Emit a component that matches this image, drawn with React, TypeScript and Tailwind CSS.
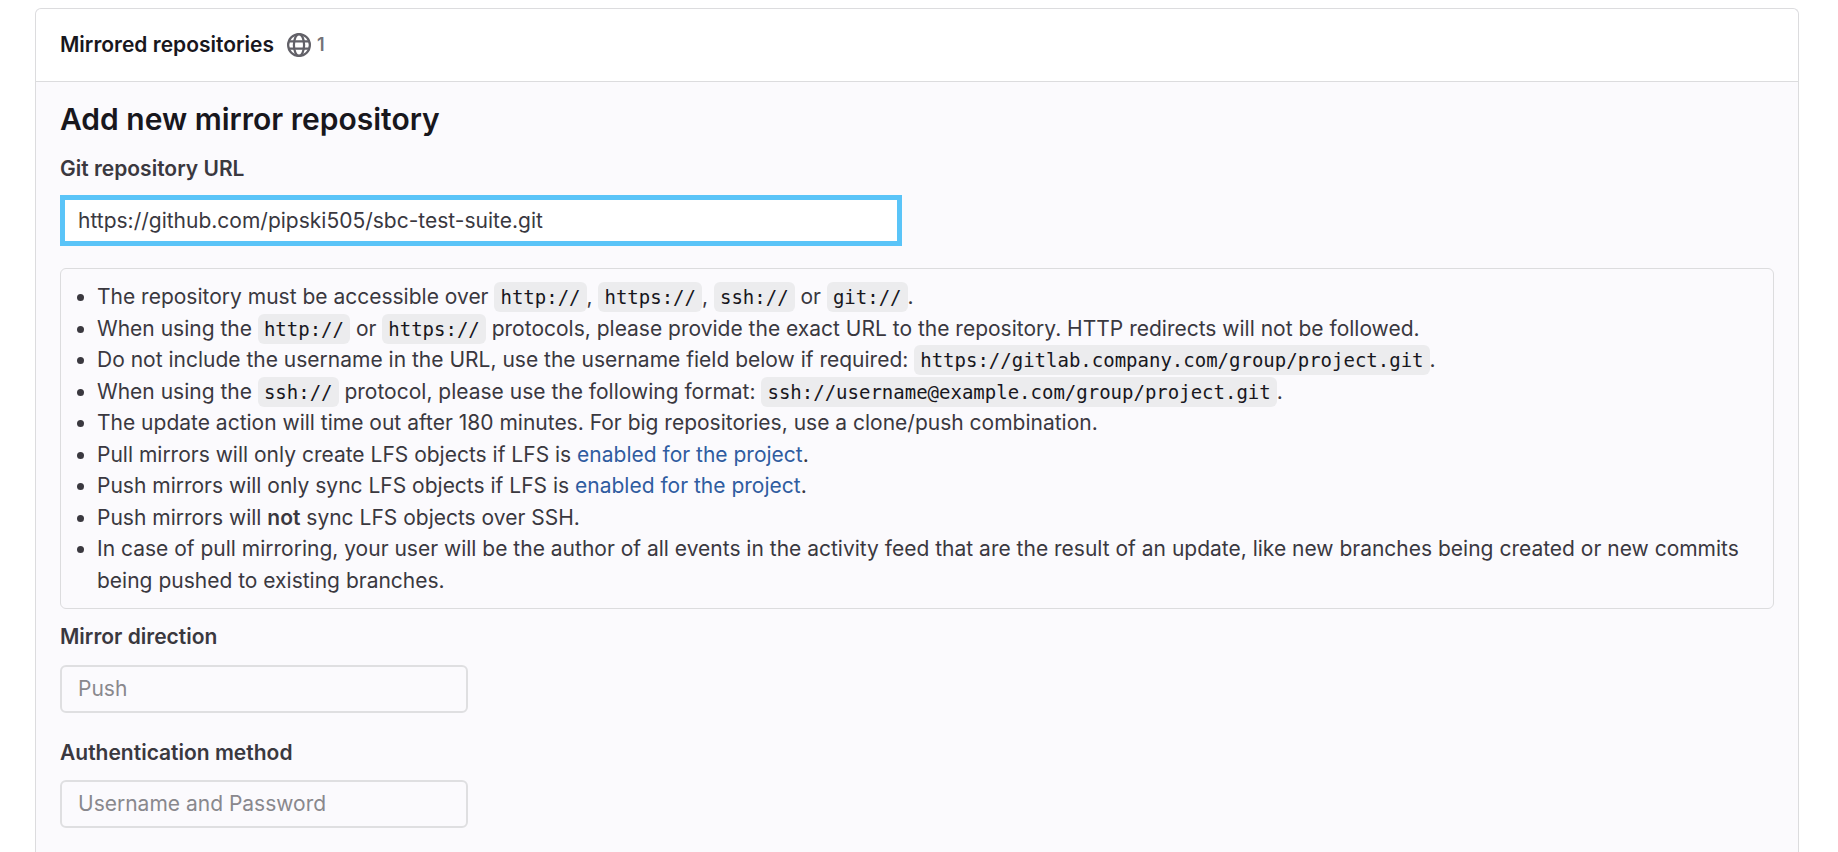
import { ReactNode, useState } from 'react';

function EarthIcon() {
  return (
    <svg viewBox="0 0 16 16" className="size-6" fill="none" stroke="currentColor" strokeWidth="1.5" aria-hidden="true">
      <circle cx="8" cy="8" r="7.25" />
      <ellipse cx="8" cy="8" rx="3.4" ry="7.25" />
      <path d="M1.2 5.65h13.6M1.2 10.35h13.6" />
    </svg>
  );
}

function Code({ children }: { children: ReactNode }) {
  return (
    <code className="rounded-md bg-[#ececee] px-1.5 py-1 font-['DejaVu_Sans_Mono',monospace] text-[19px] text-[#18171d]">
      {children}
    </code>
  );
}

function LfsLink() {
  return (
    <a href="#lfs" className="text-[#2f5ca0] hover:underline">
      enabled for the project
    </a>
  );
}

function DisabledSelect({ id, label, value }: { id: string; label: string; value: string }) {
  return (
    <div>
      <label htmlFor={id} className="block font-semibold">
        {label}
      </label>
      <select
        id={id}
        disabled
        defaultValue={value}
        className="mt-3 block h-12 w-full max-w-[408px] appearance-none rounded-md border-2 border-[#dfdfe1] bg-[#fbfafd] px-4 text-[#89888d] opacity-100"
      >
        <option value={value}>{value}</option>
      </select>
    </div>
  );
}

export default function App() {
  const [url, setUrl] = useState('https://github.com/pipski505/sbc-test-suite.git');

  return (
    <div className="flex h-screen flex-col overflow-hidden bg-white pt-2 pr-[39px] pl-[35px] font-['Inter',sans-serif] text-[21px] leading-normal text-[#3a383f]">
      <section className="grow rounded-t-md border border-b-0 border-[#dcdcde] bg-[#fbfafd]">
        <header className="flex items-center gap-[13px] rounded-t-md border-b border-[#dcdcde] bg-white px-6 py-5">
          <h2 className="font-semibold text-[#18171d]">Mirrored repositories</h2>
          <span className="flex items-center gap-1.5 text-[#626168]">
            <EarthIcon />
            <span className="text-lg font-semibold text-[#737278]">1</span>
          </span>
        </header>

        <form className="px-6 pt-5 pb-6" onSubmit={(e) => e.preventDefault()}>
          <h3 className="text-3xl leading-[34px] font-semibold text-[#18171d]">Add new mirror repository</h3>
          <label htmlFor="url" className="mt-[17px] block font-semibold">
            Git repository URL
          </label>
          <input
            id="url"
            type="text"
            value={url}
            onChange={(e) => setUrl(e.target.value)}
            className="mt-[11px] block h-[51px] w-full max-w-[842px] border-[5px] border-[#5ac4f8] bg-white px-[13px] outline-none"
          />

          <ul className="mt-[22px] list-disc rounded-md border border-[#dcdcde] py-3 pr-6 pl-9">
            <li>
              The repository must be accessible over <Code>http://</Code>, <Code>https://</Code>, <Code>ssh://</Code> or{' '}
              <Code>git://</Code>.
            </li>
            <li>
              When using the <Code>http://</Code> or <Code>https://</Code> protocols, please provide the exact URL to the
              repository. HTTP redirects will not be followed.
            </li>
            <li>
              Do not include the username in the URL, use the username field below if required:{' '}
              <Code>https://gitlab.company.com/group/project.git</Code>.
            </li>
            <li>
              When using the <Code>ssh://</Code> protocol, please use the following format:{' '}
              <Code>ssh://username@example.com/group/project.git</Code>.
            </li>
            <li>The update action will time out after 180 minutes. For big repositories, use a clone/push combination.</li>
            <li>
              Pull mirrors will only create LFS objects if LFS is <LfsLink />.
            </li>
            <li>
              Push mirrors will only sync LFS objects if LFS is <LfsLink />.
            </li>
            <li>
              Push mirrors will <strong className="font-semibold">not</strong> sync LFS objects over SSH.
            </li>
            <li>
              In case of pull mirroring, your user will be the author of all events in the activity feed that are the result
              of an update, like new branches being created or new commits being pushed to existing branches.
            </li>
          </ul>

          <div className="mt-3 flex flex-col gap-6">
            <DisabledSelect id="direction" label="Mirror direction" value="Push" />
            <DisabledSelect id="auth" label="Authentication method" value="Username and Password" />
          </div>
        </form>
      </section>
    </div>
  );
}
